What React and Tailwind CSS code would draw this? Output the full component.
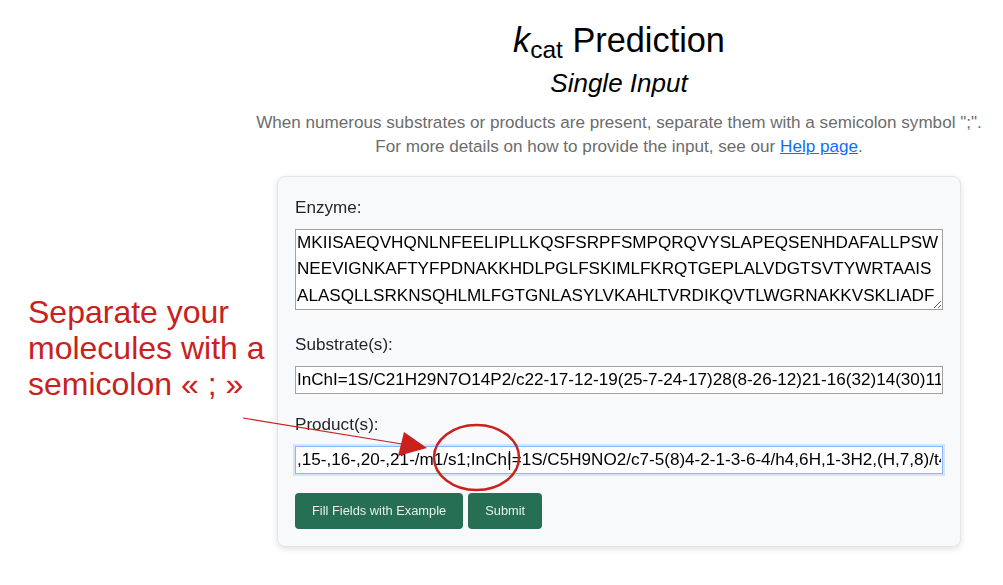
const enzyme =
  "MKIISAEQVHQNLNFEELIPLLKQSFSRPFSMPQRQVYSLAPEQSENHDAFALLPSWNEEVIGNKAFTYFPDNAKKHDLPGLFSKIMLFKRQTGEPLALVDGTSVTYWRTAAISALASQLLSRKNSQHLMLFGTGNLASYLVKAHLTVRDIKQVTLWGRNAKKVSKLIADFQ";
const substrate =
  "InChI=1S/C21H29N7O14P2/c22-17-12-19(25-7-24-17)28(8-26-12)21-16(32)14(30)11(41-21)6-39-44(36,37)42-43(34,35)38-5-10-13(29)15(31)20(40-10)27-3-1-2-9(4-27)18(23)33";
const productVisible =
  ",15-,16-,20-,21-/m1/s1;InChI=1S/C5H9NO2/c7-5(8)4-2-1-3-6-4/h4,6H,1-3H2,(H,7,8)/t4-/m0/s1";

const Field = ({ label, children, className }) => (
  <div className={className}>
    <label className="block text-[17.1px] leading-[24px] text-[#212529] mb-[9px]">{label}</label>
    {children}
  </div>
);

const App = () => {
  return (
    <div className="relative min-h-[585px] w-full bg-white font-['Liberation_Sans',Arial,sans-serif] overflow-hidden">
      <main className="ml-[235px] flex flex-col items-center pt-[20px]">
        <h1 className="text-[34.3px] leading-[40px] text-black whitespace-nowrap">
          <i>k</i>
          <span className="relative top-[6px] text-[24.5px] leading-none">cat</span> Prediction
        </h1>
        <h2 className="mt-[8px] text-[26px] leading-[31px] italic text-black">Single Input</h2>
        <p className="mt-[12px] text-center text-[17.1px] leading-[24px] text-[#6c6c6c] whitespace-nowrap">
          When numerous substrates or products are present, separate them with a semicolon symbol ";".
          <br />
          For more details on how to provide the input, see our{" "}
          <a href="#" className="text-[#0d6efd] underline">Help page</a>.
        </p>

        <div className="mt-[17px] w-[684px] rounded-lg border border-[#e3e5e8] bg-[#f8f9fa] px-[17px] pt-[19px] pb-[17px] shadow-[0_2px_6px_rgba(0,0,0,0.12)]">
          <Field label="Enzyme:">
            <textarea
              readOnly
              value={enzyme}
              rows={3}
              className="block w-full h-[81px] resize-y border border-[#a0a0a0] bg-white px-[1px] py-0 text-[17.1px] leading-[26.4px] text-black outline-none break-all"
            />
          </Field>
          <Field label="Substrate(s):" className="mt-[23px]">
            <input
              readOnly
              value={substrate}
              className="block w-full h-[28px] border border-[#a0a0a0] bg-white px-[1px] text-[17.1px] leading-[25.7px] text-black outline-none"
            />
          </Field>
          <Field label="Product(s):" className="mt-[19px]">
            <input
              readOnly
              value={productVisible}
              className="block w-full h-[28px] border border-[#86b7fe] bg-white px-[1px] text-[17.1px] leading-[25.7px] text-black outline-none shadow-[0_0_0_2px_rgba(13,110,253,0.15)]"
            />
          </Field>
          <div className="mt-[19px] flex gap-[5px]">
            <button className="h-[36px] rounded-[4px] bg-[#266e54] px-[17px] text-[12.85px] text-[#e6efeb]">
              Fill Fields with Example
            </button>
            <button className="h-[36px] rounded-[4px] bg-[#266e54] px-[17px] text-[12.85px] text-[#e6efeb]">
              Submit
            </button>
          </div>
        </div>
      </main>

      {/* annotation over the screenshot */}
      <div className="absolute left-[28px] top-[294px] text-[32px] leading-[36px] text-[#c9211e]">
        Separate your
        <br />
        molecules with a
        <br />
        semicolon « ; »
      </div>
      <svg className="pointer-events-none absolute left-0 top-0" width="1003" height="585" viewBox="0 0 1003 585">
        <line x1="509.5" y1="451" x2="509.5" y2="470" stroke="#000" strokeWidth="1.2" />
        <line x1="243" y1="418" x2="402" y2="444" stroke="#c9211e" strokeWidth="1.2" />
        <polygon points="404,432 398,456 427,448" fill="#c9211e" />
        <ellipse cx="476.5" cy="457.5" rx="42.5" ry="32.5" fill="none" stroke="#c9211e" strokeWidth="2.5" />
      </svg>
    </div>
  );
};

export default App;
